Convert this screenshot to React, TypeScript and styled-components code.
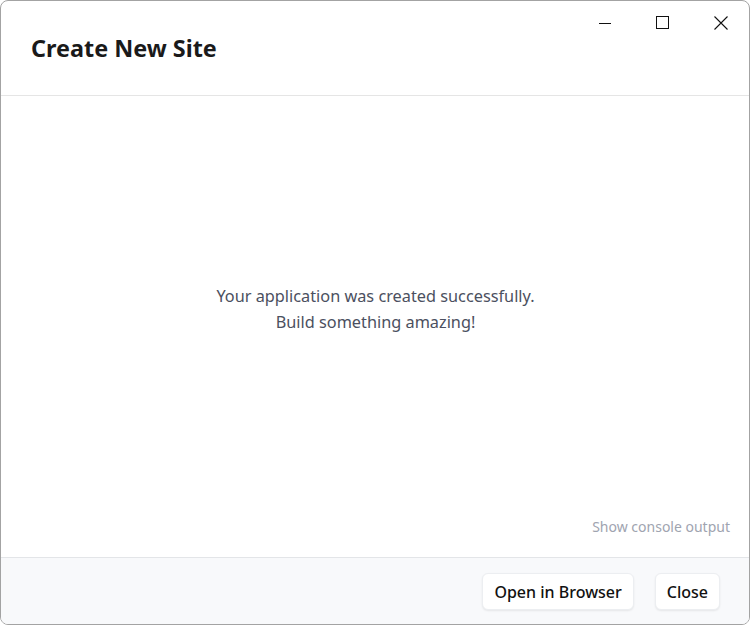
import React from "react";
import styled, { createGlobalStyle } from "styled-components";

const Global = createGlobalStyle`
  html, body { margin: 0; padding: 0; background: #ffffff; }
  body { font-family: "Noto Sans", "Open Sans", sans-serif; }
  * { box-sizing: border-box; }
`;

const Window = styled.div`
  position: relative;
  width: 750px;
  height: 625px;
  border: 1px solid #a3a3a3;
  border-radius: 8px;
  background: #ffffff;
  display: flex;
  flex-direction: column;
  overflow: hidden;
`;

const TopAccent = styled.div`
  position: absolute;
  top: -1px;
  left: 22px;
  width: 170px;
  height: 1px;
  background: linear-gradient(90deg, #c86464, #c89090 80%, #b4b4b4);
`;

const Header = styled.header`
  height: 95px;
  flex: none;
  border-bottom: 1px solid #e5e5e5;
  display: flex;
  align-items: flex-start;
  justify-content: space-between;
  padding-left: 30px;
`;

const Title = styled.h1`
  margin: 0;
  padding-top: 29px;
  font-family: "Noto Sans", sans-serif;
  font-weight: 700;
  font-size: 23.4px;
  line-height: 36px;
  color: #1a1a1a;
`;

const Controls = styled.div`
  display: flex;
  align-items: center;
  height: 43px;
  margin-right: -1px;
`;

const ControlButton = styled.div`
  width: 58px;
  height: 43px;
  display: flex;
  align-items: center;
  justify-content: center;
`;

const Body = styled.main`
  flex: 1;
  display: flex;
  flex-direction: column;
  padding: 0 19px 20px 20px;
`;

const Message = styled.div`
  flex: 1;
  display: flex;
  flex-direction: column;
  align-items: center;
  justify-content: center;
  padding-top: 4px;
  font-family: "Noto Sans", sans-serif;
  font-size: 16.3px;
  line-height: 26px;
  color: #4b5060;
  text-align: center;
`;

const ConsoleLink = styled.div`
  align-self: flex-end;
  font-family: "Noto Sans", sans-serif;
  font-size: 14px;
  line-height: 20px;
  color: #a0a4b0;
`;

const Footer = styled.footer`
  height: 67px;
  flex: none;
  border-top: 1px solid #e3e5e8;
  background: #f8f9fb;
  display: flex;
  align-items: center;
  justify-content: flex-end;
  gap: 21px;
  padding: 0 29px 0 0;
`;

const Button = styled.button`
  height: 37px;
  padding: 0 11px;
  border: 1px solid #eceef1;
  border-radius: 6px;
  background: #ffffff;
  box-shadow: 0 1px 2px rgba(0, 0, 0, 0.08);
  font-family: "Noto Sans", sans-serif;
  font-size: 16px;
  font-weight: 500;
  color: #111111;
  margin-top: 1px;
`;

export default function App() {
  return (
    <>
      <Global />
      <Window>
        <TopAccent />
        <Header>
          <Title>Create New Site</Title>
          <Controls>
            <ControlButton>
              <svg width="14" height="14" viewBox="0 0 14 14">
                <path d="M1 7.5h12" stroke="#111" strokeWidth="1" />
              </svg>
            </ControlButton>
            <ControlButton>
              <svg width="14" height="14" viewBox="0 0 14 14">
                <rect x="0.5" y="0.5" width="12" height="12" fill="none" stroke="#111" strokeWidth="1" />
              </svg>
            </ControlButton>
            <ControlButton>
              <svg width="14" height="14" viewBox="0 0 14 14">
                <path d="M0.5 0.5L13.5 13.5M13.5 0.5L0.5 13.5" stroke="#111" strokeWidth="1.1" />
              </svg>
            </ControlButton>
          </Controls>
        </Header>
        <Body>
          <Message>
            <div>Your application was created successfully.</div>
            <div>Build something amazing!</div>
          </Message>
          <ConsoleLink>Show console output</ConsoleLink>
        </Body>
        <Footer>
          <Button>Open in Browser</Button>
          <Button>Close</Button>
        </Footer>
      </Window>
    </>
  );
}
